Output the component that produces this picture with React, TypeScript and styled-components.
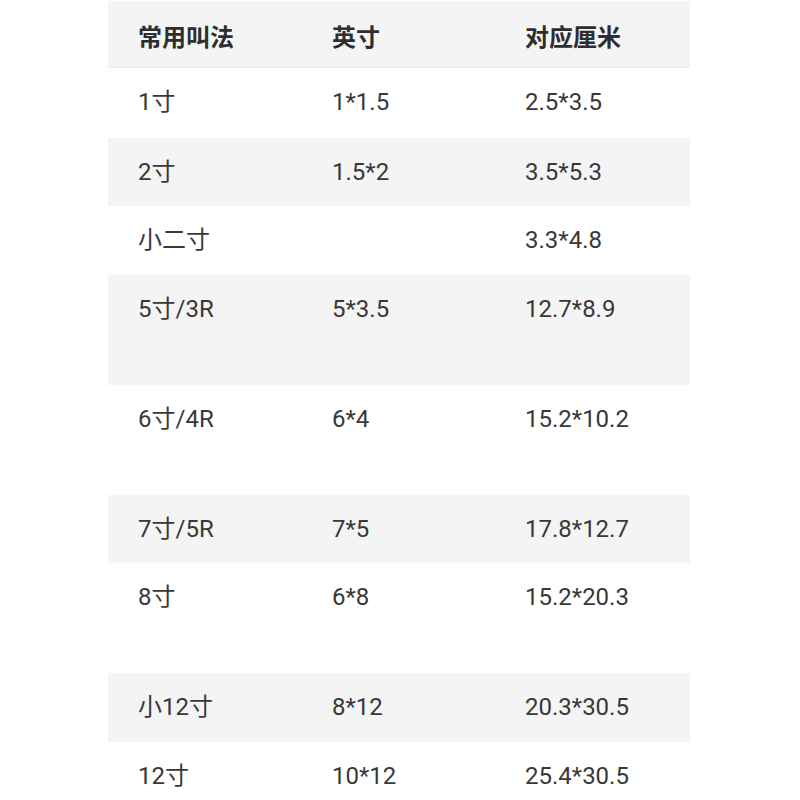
import React from "react";
import styled, { createGlobalStyle } from "styled-components";

const Global = createGlobalStyle`
  html, body { margin: 0; padding: 0; background: #ffffff; }
  body { font-family: Roboto, "Noto Sans CJK SC", sans-serif; }
`;

const Page = styled.div`
  width: 800px;
  height: 800px;
  overflow: hidden;
  background: #ffffff;
  padding-top: 1px;
  box-sizing: border-box;
`;

const Table = styled.div`
  width: 582px;
  margin-left: 108px;
  display: flex;
  flex-direction: column;
`;

const Row = styled.div<{ $h: number; $shade: boolean; $head?: boolean }>`
  display: grid;
  grid-template-columns: 194px 193px 1fr;
  height: ${(p) => p.$h}px;
  box-sizing: border-box;
  background: ${(p) => (p.$shade ? "#f4f4f4" : "#ffffff")};
  border-bottom: ${(p) => (p.$head ? "1px solid #e9e9e9" : "none")};
`;

const Cell = styled.div<{ $head?: boolean }>`
  padding: ${(p) => (p.$head ? "19px" : "16px")} 0 0 30px;
  font-family: Roboto, "Noto Sans CJK SC", sans-serif;
  font-size: 24px;
  line-height: 36px;
  color: ${(p) => (p.$head ? "#2e2e2e" : "#383838")};
  font-weight: ${(p) => (p.$head ? 700 : 400)};
  white-space: nowrap;
`;

const head: [string, string, string] = ["常用叫法", "英寸", "对应厘米"];

const rows: { c: [string, string, string]; h: number }[] = [
  { c: ["1寸", "1*1.5", "2.5*3.5"], h: 70 },
  { c: ["2寸", "1.5*2", "3.5*5.3"], h: 68 },
  { c: ["小二寸", "", "3.3*4.8"], h: 69 },
  { c: ["5寸/3R", "5*3.5", "12.7*8.9"], h: 110 },
  { c: ["6寸/4R", "6*4", "15.2*10.2"], h: 110 },
  { c: ["7寸/5R", "7*5", "17.8*12.7"], h: 68 },
  { c: ["8寸", "6*8", "15.2*20.3"], h: 110 },
  { c: ["小12寸", "8*12", "20.3*30.5"], h: 69 },
  { c: ["12寸", "10*12", "25.4*30.5"], h: 69 },
];

export default function App() {
  return (
    <Page>
      <Global />
      <Table>
        <Row $h={67} $shade $head>
          {head.map((t) => (
            <Cell key={t} $head>
              {t}
            </Cell>
          ))}
        </Row>
        {rows.map((r, i) => (
          <Row key={i} $h={r.h} $shade={i % 2 === 1}>
            {r.c.map((t, j) => (
              <Cell key={j}>{t}</Cell>
            ))}
          </Row>
        ))}
      </Table>
    </Page>
  );
}
